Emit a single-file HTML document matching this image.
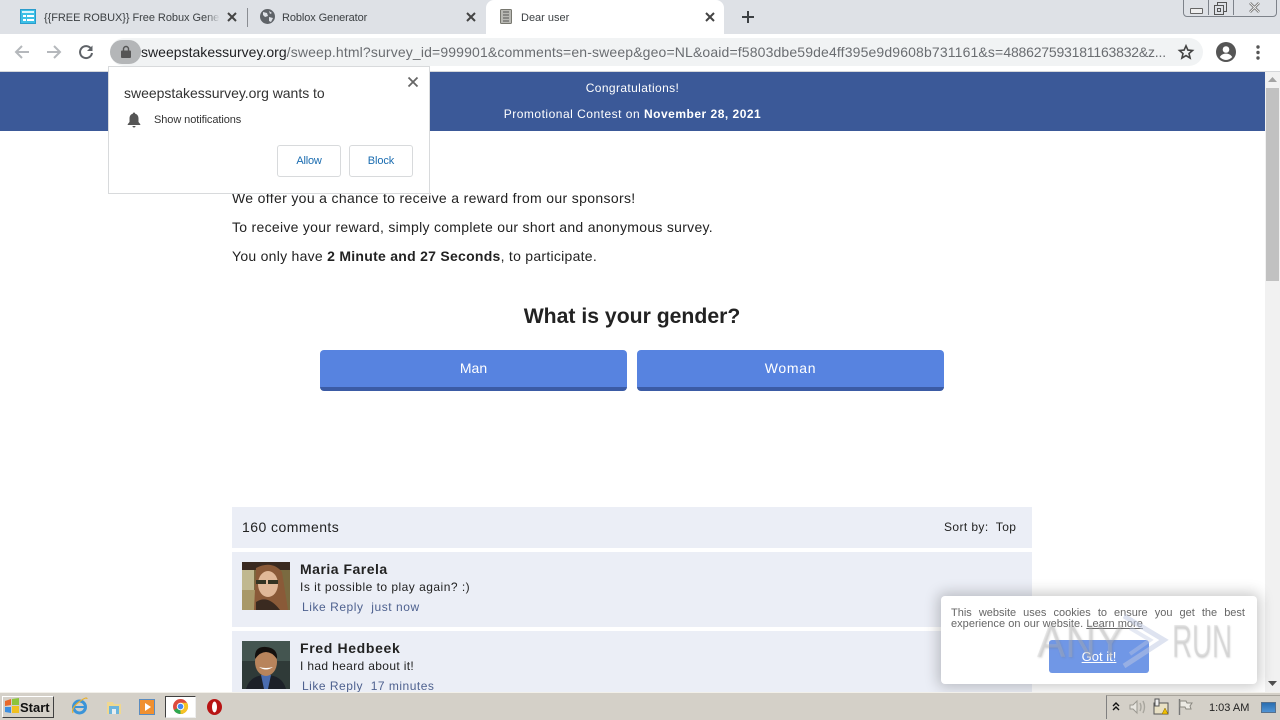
<!DOCTYPE html>
<html lang="en"><head><meta charset="utf-8"><title>Dear user</title>
<style>
html,body{margin:0;padding:0;width:1280px;height:720px;overflow:hidden;background:#fff;font-family:"Liberation Sans",sans-serif;color:#222}
.a{position:absolute;white-space:nowrap}
svg{position:absolute;overflow:visible}
.c{background:#ebeef6}
.link{color:#4e618f}
</style></head><body>
<!-- tab strip -->
<div class="a" style="left:0;top:0;width:1280px;height:34px;background:#dee1e6"></div>
<div class="a" style="left:486px;top:0;width:238px;height:34px;background:#fff;border-radius:8px 8px 0 0"></div>
<div class="a" style="left:247px;top:8px;width:1px;height:19px;background:#8a8d92"></div>
<svg style="left:20px;top:9px" width="16" height="15"><rect x=".5" y=".5" width="15" height="14" fill="#3cc0e6" stroke="#2a9ccc"/><rect x="2" y="2" width="12" height="2" fill="#d8f4fc"/><rect x="3" y="6" width="3" height="2" fill="#fff"/><rect x="7" y="6" width="7" height="2" fill="#fff"/><rect x="3" y="10" width="3" height="2" fill="#fff"/><rect x="7" y="10" width="7" height="2" fill="#fff"/></svg>
<div class="a" style="left:44px;top:11px;width:176px;overflow:hidden;font-size:11px;line-height:14px;letter-spacing:-.05px;color:#3c4043">{{FREE ROBUX}} Free Robux Gener</div>
<div class="a" style="left:206px;top:8px;width:14px;height:18px;background:linear-gradient(90deg,rgba(222,225,230,0),#dee1e6)"></div>
<svg style="left:227px;top:12px" width="10" height="10"><path d="M1 1L9 9M9 1L1 9" stroke="#444" stroke-width="2"/></svg>
<svg style="left:260px;top:9px" width="15" height="15" viewBox="0 0 15 15"><circle cx="7.5" cy="7.5" r="7.5" fill="#5f6368"/><path d="M3 3l4 1 1 3-3 1-2-2zM9 8l4 1-2 4-2-1zM9 2l3 2-2 1z" fill="#dee1e6"/></svg>
<div class="a" style="left:282px;top:11px;font-size:11px;line-height:14px;letter-spacing:-.1px;color:#3c4043">Roblox Generator</div>
<svg style="left:466px;top:12px" width="10" height="10"><path d="M1 1L9 9M9 1L1 9" stroke="#444" stroke-width="2"/></svg>
<svg style="left:500px;top:9px" width="12" height="15"><rect x=".5" y=".5" width="11" height="14" rx="1" fill="#b9b9b4" stroke="#77776f"/><path d="M3 3h6M3 6h6M3 9h6M3 12h6" stroke="#555" stroke-width="1"/></svg>
<div class="a" style="left:521px;top:11px;font-size:11px;line-height:14px;color:#3c4043">Dear user</div>
<svg style="left:705px;top:12px" width="10" height="10"><path d="M1 1L9 9M9 1L1 9" stroke="#444" stroke-width="2"/></svg>
<svg style="left:741px;top:10px" width="14" height="14"><path d="M7 1V13M1 7H13" stroke="#3c4043" stroke-width="2"/></svg>
<!-- window controls -->
<div class="a" style="left:1183px;top:-3px;width:92px;height:18px;border:1px solid #7d828a;border-radius:0 0 4px 4px;background:#dee1e6"></div>
<div class="a" style="left:1208px;top:0;width:1px;height:15px;background:#7d828a"></div>
<div class="a" style="left:1233px;top:0;width:1px;height:15px;background:#7d828a"></div>
<div class="a" style="left:1190px;top:8px;width:11px;height:4px;border:1px solid #666;border-radius:1px;background:#eee"></div>
<svg style="left:1214px;top:2px" width="13" height="13"><rect x="3.5" y=".5" width="9" height="9" fill="#dee1e6" stroke="#555"/><rect x=".5" y="3.5" width="9" height="9" fill="#dee1e6" stroke="#555"/><rect x="3.5" y="6.5" width="3" height="3" fill="none" stroke="#555"/></svg>
<svg style="left:1248px;top:2px" width="13" height="11"><path d="M2 1L11 10M11 1L2 10" stroke="#666" stroke-width="2.6"/><path d="M2 1L11 10M11 1L2 10" stroke="#eee" stroke-width="1"/></svg>
<!-- toolbar -->
<div class="a" style="left:0;top:34px;width:1280px;height:37px;background:#fff"></div>
<div class="a" style="left:0;top:71px;width:1280px;height:1px;background:#d5d7da"></div>
<svg style="left:14px;top:44px" width="16" height="16"><path d="M15 8H2M8 2L2 8l6 6" fill="none" stroke="#b5b8bc" stroke-width="2"/></svg>
<svg style="left:46px;top:44px" width="16" height="16"><path d="M1 8H14M8 2l6 6-6 6" fill="none" stroke="#b5b8bc" stroke-width="2"/></svg>
<svg style="left:78px;top:44px" width="16" height="16"><path d="M13.2 5A6 6 0 1 0 14 9" fill="none" stroke="#5f6368" stroke-width="2"/><path d="M14.5 1.5V7H9z" fill="#5f6368"/></svg>
<div class="a" style="left:110px;top:38px;width:1093px;height:28px;border-radius:14px;background:#f1f3f4"></div>
<div class="a" style="left:110px;top:40px;width:31px;height:24px;border-radius:12px;background:#b4b6b8"></div>
<svg style="left:121px;top:45px" width="10" height="13"><path d="M2.5 6V4a2.5 2.5 0 0 1 5 0V6" fill="none" stroke="#555" stroke-width="1.4"/><rect y="5.5" width="10" height="7.5" rx="1" fill="#555"/></svg>
<div class="a" style="left:141px;top:43px;width:1030px;overflow:hidden;font-size:14px;line-height:18px;color:#6a6d71"><span style="color:#202124;letter-spacing:.02px">sweepstakessurvey.org</span><span style="letter-spacing:.14px">/sweep.html?survey_id=999901&amp;comments=en-sweep&amp;geo=NL&amp;oaid=f5803dbe59de4ff395e9d9608b731161&amp;s=</span><span style="letter-spacing:-.2px">488627593181163832&amp;z...</span></div>
<svg style="left:1178px;top:44px" width="16" height="16" viewBox="0 0 16 16"><path d="M8 1.8l1.9 4.3 4.6.4-3.5 3 1.1 4.6L8 11.6l-4.1 2.5L5 9.5l-3.5-3 4.6-.4z" fill="none" stroke="#444" stroke-width="1.6"/></svg>
<svg style="left:1216px;top:42px" width="20" height="20" viewBox="0 0 20 20"><circle cx="10" cy="10" r="10" fill="#555"/><circle cx="10" cy="7.5" r="3.3" fill="#fff"/><path d="M3.8 15c1.5-2.6 4-3.4 6.2-3.4s4.700.8 6.200 3.400a8 8 0 0 1-12.400 0z" fill="#fff"/></svg>
<svg style="left:1256px;top:45px" width="4" height="15"><circle cx="2" cy="2" r="1.700" fill="#555"/><circle cx="2" cy="7.500" r="1.700" fill="#555"/><circle cx="2" cy="13" r="1.700" fill="#555"/></svg>
<!-- page header -->
<div class="a" style="left:0;top:72px;width:1265px;height:59px;background:#3b5998"></div>
<div class="a" style="left:0;top:81px;width:1265px;text-align:center;font-size:12px;line-height:14px;letter-spacing:.38px;color:#fff">Congratulations!</div>
<div class="a" style="left:0;top:107px;width:1265px;text-align:center;font-size:12px;line-height:14px;letter-spacing:.5px;color:#fff">Promotional Contest on <b>November 28, 2021</b></div>
<!-- scrollbar -->
<div class="a" style="left:1265px;top:72px;width:15px;height:620px;background:#f1f1f1"></div>
<div class="a" style="left:1266px;top:88px;width:13px;height:193px;background:#c1c1c1"></div>
<svg style="left:1268px;top:77px" width="9" height="6"><path d="M4.500 0L9 5H0z" fill="#a3a3a3"/></svg>
<svg style="left:1268px;top:681px" width="9" height="6"><path d="M0 0H9L4.500 5z" fill="#505050"/></svg>
<!-- body text -->
<div class="a" style="left:232px;top:190px;font-size:14px;line-height:16px;letter-spacing:.34px;color:#222">We offer you a chance to receive a reward from our sponsors!</div>
<div class="a" style="left:232px;top:219px;font-size:14px;line-height:16px;letter-spacing:.29px;color:#222">To receive your reward, simply complete our short and anonymous survey.</div>
<div class="a" style="left:232px;top:248px;font-size:14px;line-height:16px;letter-spacing:.27px;color:#222">You only have <b>2 Minute and 27 Seconds</b>, to participate.</div>
<div class="a" style="left:232px;top:304px;width:800px;text-align:center;font-size:21.200px;line-height:26px;font-weight:bold;color:#222">What is your gender?</div>
<div class="a" style="left:320px;top:350px;width:307px;height:37px;line-height:37px;background:#5783e0;border-bottom:4px solid #3b5ba5;border-radius:4px;text-align:center;color:#fff;font-size:14px">Man</div>
<div class="a" style="left:637px;top:350px;width:307px;height:37px;line-height:37px;background:#5783e0;border-bottom:4px solid #3b5ba5;border-radius:4px;text-align:center;color:#fff;font-size:14px;letter-spacing:.7px">Woman</div>
<!-- comments -->
<div class="a c" style="left:232px;top:507px;width:800px;height:41px"></div>
<div class="a" style="left:242px;top:519px;font-size:14px;line-height:16px;letter-spacing:.45px">160 comments</div>
<div class="a" style="left:944px;top:520px;font-size:12px;line-height:15px;letter-spacing:.4px">Sort by:&nbsp; Top</div>
<div class="a c" style="left:232px;top:552px;width:800px;height:75px"></div>
<svg style="left:242px;top:562px" width="48" height="48" viewBox="0 0 48 48"><rect width="48" height="48" fill="#7a6a40"/><rect width="48" height="8" fill="#3a2a20"/><rect y="28" width="14" height="20" fill="#a89868"/><rect y="8" width="12" height="20" fill="#c0b890"/><path d="M14 6Q30-2 40 10L46 48H12Z" fill="#8a5a38"/><ellipse cx="26" cy="22" rx="10" ry="13" fill="#e0b898"/><path d="M14 18h10v4H14zM26 18h10v4H26z" fill="#332"/><path d="M14 40Q26 32 38 48H14Z" fill="#3a2a20"/></svg>
<div class="a" style="left:300px;top:561px;font-size:14px;line-height:16px;letter-spacing:.5px;font-weight:bold;color:#222">Maria Farela</div>
<div class="a" style="left:300px;top:580px;font-size:12px;line-height:15px;letter-spacing:.48px;color:#222">Is it possible to play again? :)</div>
<div class="a link" style="left:302px;top:600px;font-size:12px;line-height:15px;letter-spacing:.55px">Like Reply&nbsp; just now</div>
<div class="a c" style="left:232px;top:631px;width:800px;height:61px"></div>
<svg style="left:242px;top:641px" width="48" height="48" viewBox="0 0 48 48"><rect width="48" height="48" fill="#2f3a38"/><path d="M0 0h48v20H0z" fill="#445550"/><path d="M4 48Q8 34 24 34T44 48Z" fill="#1c2028"/><path d="M19 34h10l-3 14h-4z" fill="#4a6cb0"/><ellipse cx="24" cy="21" rx="11" ry="14" fill="#b8845c"/><path d="M13 18Q12 5 24 6T35 18Q30 11 24 11T13 18Z" fill="#14100e"/><path d="M17 26q7 5 14 0q-7 2-14 0z" fill="#fff"/></svg>
<div class="a" style="left:300px;top:640px;font-size:14px;line-height:16px;letter-spacing:.65px;font-weight:bold;color:#222">Fred Hedbeek</div>
<div class="a" style="left:300px;top:659px;font-size:12px;line-height:15px;letter-spacing:.35px;color:#222">I had heard about it!</div>
<div class="a link" style="left:302px;top:679px;font-size:12px;line-height:15px;letter-spacing:.5px">Like Reply&nbsp; 17 minutes</div>
<!-- cookie box -->
<div class="a" style="left:941px;top:596px;width:316px;height:88px;background:#fff;border-radius:4px;box-shadow:0 0 14px 3px rgba(0,0,0,.22)"></div>
<div class="a" style="left:951px;top:608px;width:294px;font-size:11px;line-height:11px;color:#666;white-space:normal;text-align:justify;text-align-last:justify">This website uses cookies to ensure you get the best</div>
<div class="a" style="left:951px;top:619px;font-size:11px;line-height:11px;letter-spacing:.03px;color:#666">experience on our website. <span style="text-decoration:underline;color:#666">Learn more</span></div>
<div class="a" style="left:1049px;top:640px;width:100px;height:33px;line-height:33px;background:#7097e6;border-radius:3px;text-align:center;color:#fff;font-size:13px;text-decoration:underline">Got it!</div>
<!-- watermark -->
<div class="a" style="left:1037px;top:618px;font-size:46px;line-height:46px;color:rgba(190,190,190,.3);text-shadow:1px 1px 2px rgba(120,120,120,.25);transform:scaleX(.92);transform-origin:0 0">ANY</div>
<div class="a" style="left:1172px;top:618px;font-size:46px;line-height:46px;color:rgba(190,190,190,.3);text-shadow:1px 1px 2px rgba(120,120,120,.25);transform:scaleX(.6);transform-origin:0 0">RUN</div>
<svg style="left:1118px;top:610px" width="50" height="62"><path d="M6 6L46 30 6 56" fill="none" stroke="rgba(190,200,225,.5)" stroke-width="5"/><path d="M12 18L32 30 12 44" fill="none" stroke="rgba(190,200,225,.4)" stroke-width="4"/></svg>
<!-- notification permission popup -->
<div class="a" style="left:108px;top:66px;width:322px;height:128px;background:#fff;border:1px solid #d8dadc;box-sizing:border-box"></div>
<div class="a" style="left:124px;top:85px;font-size:14px;line-height:16px;letter-spacing:-.02px;color:#333">sweepstakessurvey.org wants to</div>
<svg style="left:407px;top:76px" width="12" height="12"><path d="M1.500 1.500L10.500 10.500M10.500 1.500L1.500 10.500" stroke="#666" stroke-width="1.800"/></svg>
<svg style="left:127px;top:112px" width="14" height="16" viewBox="0 0 14 16"><path d="M7 0.500c.8 0 1.200.5 1.200 1.200C10.500 2.300 11.500 4 11.500 6.500V10l1.800 2.200v.8H.7v-.8L2.500 10V6.500C2.500 4 3.500 2.300 5.800 1.700 5.800 1 6.200.5 7 .5z" fill="#555"/><path d="M5.500 14h3a1.500 1.500 0 0 1-3 0z" fill="#555"/></svg>
<div class="a" style="left:154px;top:113px;font-size:11px;line-height:14px;letter-spacing:-.08px;color:#333">Show notifications</div>
<div class="a" style="left:277px;top:145px;width:64px;height:32px;line-height:30px;box-sizing:border-box;border:1px solid #d8dadc;border-radius:3px;text-align:center;font-size:11px;letter-spacing:-.2px;color:#1a6cb0;background:#fff">Allow</div>
<div class="a" style="left:349px;top:145px;width:64px;height:32px;line-height:30px;box-sizing:border-box;border:1px solid #d8dadc;border-radius:3px;text-align:center;font-size:11px;letter-spacing:-.1px;color:#1a6cb0;background:#fff">Block</div>
<!-- taskbar -->
<div class="a" style="left:0;top:692px;width:1280px;height:28px;background:#d4d0c8;border-top:1px solid #f2f0ea;box-sizing:border-box"></div>
<div class="a" style="left:2px;top:696px;width:52px;height:22px;background:#d4d0c8;border:1px solid;border-color:#fff #404040 #404040 #fff;box-sizing:border-box"></div>
<svg style="left:4px;top:698px" width="16" height="16"><path d="M1 3l6-2v6L1 8z" fill="#e8682a"/><path d="M8 1l7-1v7l-7 0z" fill="#8cc43c"/><path d="M1 9l6 0v6l-6-1z" fill="#3c8ee0"/><path d="M8 8h7v7l-7 0z" fill="#f0c020"/></svg>
<div class="a" style="left:20px;top:700px;font-size:13px;line-height:15px;font-weight:bold;color:#111">Start</div>
<svg style="left:71px;top:698px" width="17" height="17" viewBox="0 0 17 17"><circle cx="8.500" cy="9" r="6" fill="none" stroke="#3b94d8" stroke-width="3"/><path d="M3 9h12" stroke="#3b94d8" stroke-width="2"/><path d="M2 15Q0 10 8 4T16 1" fill="none" stroke="#e8b030" stroke-width="1.200"/></svg>
<svg style="left:106px;top:699px" width="16" height="16"><path d="M1 3h6l1 2h7v10H1z" fill="#f0d890"/><rect x="3" y="7" width="10" height="8" fill="#6cb4dc"/><rect x="6" y="10" width="4" height="5" fill="#e8eef0"/></svg>
<svg style="left:139px;top:699px" width="16" height="16"><rect x=".5" y=".5" width="15" height="15" fill="#f09030" stroke="#5a8cc0"/><path d="M6 4l6 4-6 4z" fill="#fff"/></svg>
<div class="a" style="left:165px;top:696px;width:31px;height:22px;background:#fff;border:1px solid;border-color:#404040 #eee #eee #404040;box-sizing:border-box"></div>
<svg style="left:173px;top:699px" width="15" height="15" viewBox="0 0 16 16"><circle cx="8" cy="8" r="8" fill="#dd4b3e"/><path d="M8 8L1 12A8 8 0 0 0 11 15.400z" fill="#2da94f"/><path d="M8 4h7A8 8 0 0 1 8 16z" fill="#f7c325"/><circle cx="8" cy="8" r="3.500" fill="#4688f1" stroke="#fff"/></svg>
<svg style="left:207px;top:699px" width="15" height="16"><ellipse cx="7.500" cy="8" rx="7.500" ry="8" fill="#b81414"/><ellipse cx="7.500" cy="8" rx="2.500" ry="5.500" fill="#fff"/></svg>
<!-- tray -->
<div class="a" style="left:1106px;top:695px;width:174px;height:24px;border-left:1px solid #808080;border-top:1px solid #a8a49c;box-sizing:border-box"></div>
<svg style="left:1112px;top:702px" width="8" height="10"><path d="M1 4l3-3 3 3M1 8l3-3 3 3" fill="none" stroke="#111" stroke-width="1.400"/></svg>
<svg style="left:1129px;top:699px" width="17" height="16"><path d="M1 6h3l4-4v12l-4-4H1z" fill="#e8e6e0" stroke="#9a9890"/><path d="M11 4q2 4 0 8M14 2q3 6 0 12" fill="none" stroke="#a8a69e" stroke-width="1.400"/></svg>
<svg style="left:1153px;top:699px" width="16" height="16"><rect x="1" y="4" width="14" height="11" fill="#e8e0c4" stroke="#555"/><rect x="2" y="0" width="4" height="7" fill="#eee" stroke="#555"/><path d="M9 15l3-6 3 6z" fill="#f0c000" stroke="#806000" stroke-width=".5"/></svg>
<svg style="left:1177px;top:699px" width="16" height="16"><path d="M2.500 0V16" stroke="#777" stroke-width="1.400"/><path d="M3 2h6l1 2h5l-2 3 1 3H9L8 8H3z" fill="#eceae4" stroke="#8a8880"/></svg>
<div class="a" style="left:1209px;top:701px;font-size:11px;line-height:14px;color:#222">1:03 AM</div>
<div class="a" style="left:1261px;top:702px;width:15px;height:11px;background:linear-gradient(#2a6eb0,#4f93d4);border:1px solid #56708c;box-sizing:border-box"></div>
</body></html>
